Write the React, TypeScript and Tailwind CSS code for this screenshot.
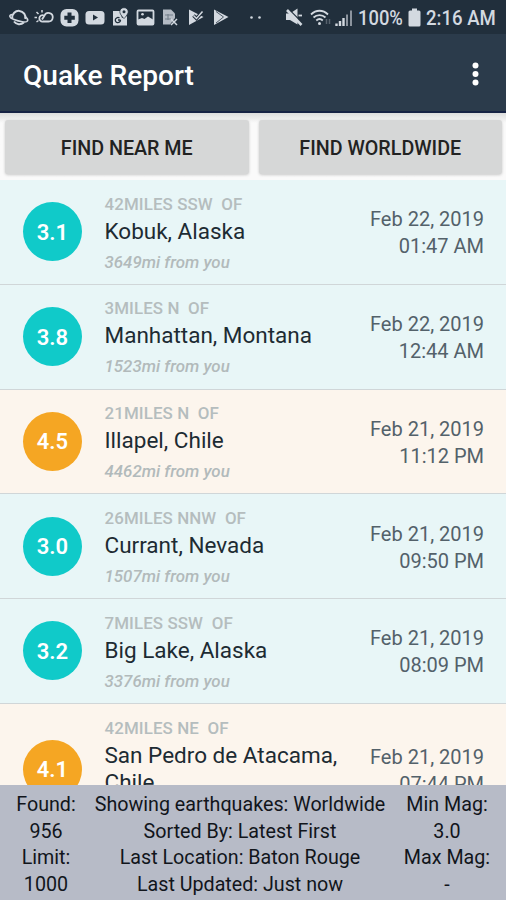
type Quake = {
    mag: string;
    offset: string;
    place: string;
    distance: string;
    date: string;
    time: string;
};

const quakes: Quake[] = [
    { mag: "3.1", offset: "42MILES SSW  OF", place: "Kobuk, Alaska", distance: "3649mi from you", date: "Feb 22, 2019", time: "01:47 AM" },
    { mag: "3.8", offset: "3MILES N  OF", place: "Manhattan, Montana", distance: "1523mi from you", date: "Feb 22, 2019", time: "12:44 AM" },
    { mag: "4.5", offset: "21MILES N  OF", place: "Illapel, Chile", distance: "4462mi from you", date: "Feb 21, 2019", time: "11:12 PM" },
    { mag: "3.0", offset: "26MILES NNW  OF", place: "Currant, Nevada", distance: "1507mi from you", date: "Feb 21, 2019", time: "09:50 PM" },
    { mag: "3.2", offset: "7MILES SSW  OF", place: "Big Lake, Alaska", distance: "3376mi from you", date: "Feb 21, 2019", time: "08:09 PM" },
    { mag: "4.1", offset: "42MILES NE  OF", place: "San Pedro de Atacama, Chile", distance: "", date: "Feb 21, 2019", time: "07:44 PM" },
];

function NotificationIcons() {
    return (
        <svg width="230" height="34" viewBox="0 0 230 34" fill="none" stroke="#d3d9e0" strokeWidth="1.8" className="shrink-0">
            {/* planet */}
            <path d="M12.300 18a6.600 6.600 0 1 1 13 1M14 21.500a6.600 6.600 0 0 0 9.800 1" strokeWidth="2" />
            <path d="M12.500 14.500c-4 .5-3.500 3 1.500 5s12.500 3.500 13.500 1.500-.5-3-2.500-4.500" strokeWidth="1.6" />
            {/* weather */}
            <path d="M43 21.500h5.500a4.300 4.300 0 1 0-4-6l-2.500 4M43 21.500a3.200 3.200 0 1 1 1-6" />
            <path d="M37 17.500h-2.500M38.500 14l-2-2M42 12.500V10M38.500 20.500l-2 1.500" strokeWidth="1.500" />
            {/* health */}
            <rect x="60.500" y="9" width="18" height="17.500" rx="6" fill="#d3d9e0" stroke="none" />
            <path d="M69.500 12.500v10.500M64.300 17.700h10.500" stroke="#212f3c" strokeWidth="4" />
            {/* video */}
            <rect x="85.500" y="11" width="19" height="13.500" rx="3.500" fill="#d3d9e0" stroke="none" />
            <path d="M93 14.500v6l5-3z" fill="#212f3c" stroke="none" />
            {/* maps */}
            <path d="M113 11h7l2 7 5-2v9.500h-14z" fill="#d3d9e0" stroke="none" />
            <path d="M120.500 20h-2.500m2.500 0a2.600 2.600 0 1 1-1-2" stroke="#212f3c" strokeWidth="1.300" />
            <path d="M124 7.700c-2.500 0-4.200 1.700-4.200 4.100 0 2.700 4.200 6.800 4.200 6.800s4.200-4.100 4.200-6.800c0-2.400-1.700-4.100-4.200-4.100z" fill="#d3d9e0" stroke="#212f3c" strokeWidth=".7" />
            <circle cx="124" cy="11.800" r="1.500" fill="#212f3c" stroke="none" />
            {/* picture */}
            <rect x="137.500" y="10.500" width="16" height="14" rx="1" />
            <path d="M139 20.500v-8h13v6l-2.500-3-3 2.500-2.500-1z" fill="#212f3c" stroke="none" />
            <path d="M138 19.500l4-1.500 2.500 1 3.500-2.500 5 3v5h-15z" fill="#d3d9e0" stroke="none" />
            <circle cx="142.500" cy="14.300" r="1.300" fill="#d3d9e0" stroke="none" />
            {/* card error */}
            <path d="M163 9.500h8l4 4V18l-5 6.500h-7z" fill="#b4bbc4" stroke="none" />
            <path d="M165 15h8M165 19h6M168 14v6" stroke="#75808b" strokeWidth="1.100" />
            <path d="M171 19l6 6M177 19l-6 6" stroke="#d3d9e0" strokeWidth="1.500" />
            {/* play check */}
            <path d="M189 9.500l14.500 7.500L189 25z" fill="#d3d9e0" stroke="none" />
            <path d="M193.500 15.500l3 3 7-8" stroke="#212f3c" strokeWidth="3.500" />
            <path d="M193.500 15.500l3 3 6-7" strokeWidth="1.500" />
            {/* play store */}
            <path d="M214 9.500l14.500 7.500L214 25z" fill="#d3d9e0" stroke="none" />
            <path d="M216 11.500l7.500 5.500-7.500 6" stroke="#4c5966" strokeWidth="1" />
        </svg>
    );
}

function SystemIcons() {
    return (
        <svg width="106" height="34" viewBox="0 0 106 34" fill="none" stroke="#d3d9e0" className="shrink-0">
            <circle cx="1.500" cy="17.500" r="1.300" fill="#d3d9e0" stroke="none" />
            <circle cx="9.500" cy="17.500" r="1.300" fill="#d3d9e0" stroke="none" />
            {/* muted speaker */}
            <path d="M36 13.500h4l7.500-5v16l-7.500-4.500h-4z" fill="#d3d9e0" stroke="none" />
            <path d="M39 9.500l13.500 13.500" stroke="#212f3c" strokeWidth="1.200" />
            <path d="M37 10l14.500 15" strokeWidth="2.600" />
            <path d="M48.500 15.500h3.500" strokeWidth="1.800" />
            {/* wifi */}
            <path d="M61 14.500c5-5 12-5 17 0" strokeWidth="1.800" />
            <path d="M63.500 17.500c3.500-3.300 8.500-3.300 12 0" strokeWidth="1.800" />
            <path d="M66.300 20.500c2-1.800 4.500-1.800 6.500 0" strokeWidth="1.800" />
            <circle cx="69.500" cy="23.500" r="1.500" fill="#d3d9e0" stroke="none" />
            <path d="M76.500 19v5M79.500 19v5" strokeWidth="1.500" opacity=".3" />
            {/* signal */}
            <path d="M86.500 23.500V26M90 21V26M93.500 18V26" strokeWidth="2.400" />
            <path d="M97 14.500V26M101 10.500V26" strokeWidth="2" opacity=".6" />
        </svg>
    );
}

function StatusBar() {
    return (
        <div className="flex h-[34px] shrink-0 items-center bg-[#212f3c] text-[20px] text-[#d3d9e0]">
            <NotificationIcons />
            <div className="ml-[20px]"><SystemIcons /></div>
            <span className="ml-[2px] w-[50px] origin-left scale-x-[0.92] whitespace-nowrap pt-0.5 font-medium">100%</span>
            <svg width="14" height="20" viewBox="0 0 14 20" fill="#d3d9e0" className="mt-0.5 shrink-0">
                <path d="M4 0.500h5v2h2a1.500 1.500 0 0 1 1.500 1.500v13a1.500 1.500 0 0 1-1.500 1.500H2a1.500 1.500 0 0 1-1.500-1.500v-13A1.500 1.500 0 0 1 2 2.500h2z" />
            </svg>
            <span className="ml-[4px] origin-left scale-x-[0.93] whitespace-nowrap pt-0.5 font-medium">2:16 AM</span>
        </div>
    );
}

function QuakeRow({ quake }: { quake: Quake }) {
    const strong = quake.mag.startsWith("4");
    const tall = quake.place.length > 20;

    return (
        <li className={`flex shrink-0 items-center border-b border-[#d0d6d8] pl-[23px] pr-[22px] ${tall ? "h-[132px]" : "h-[104.75px]"} ${strong ? "bg-[#fcf5ed]" : "bg-[#e8f6f7]"}`}>
            <div className={`flex size-[59px] shrink-0 items-center justify-center rounded-full pt-px text-[22px] font-semibold text-white ${strong ? "bg-[#f5a623]" : "bg-[#10cac9]"}`}>
                {quake.mag}
            </div>
            <div className="ml-[22.5px] flex-1 pt-[1.5px]">
                <p className="whitespace-pre text-[16.9px] font-medium leading-[20px] tracking-[0.1px] text-[#b5bdbe]">{quake.offset}</p>
                <p className="mt-[4px] text-[22.5px] leading-[27px] text-[#1d2b33]">{quake.place}</p>
                <p className="mt-[7px] h-[20px] text-[16.9px] font-medium italic leading-[20px] text-[#b2babb]">{quake.distance}</p>
            </div>
            <div className="shrink-0 pt-[3px] text-right text-[20px] leading-[27px] text-[#53616a]">
                <p>{quake.date}</p>
                <p>{quake.time}</p>
            </div>
        </li>
    );
}

function Footer() {
    return (
        <div className="flex h-[115px] shrink-0 bg-[#b7bbc7] pt-[7px] text-center text-[19.7px] leading-[26.7px] text-[#11151b]">
            <div className="w-[92px]">
                <p>Found:</p>
                <p>956</p>
                <p>Limit:</p>
                <p>1000</p>
            </div>
            <div className="w-[296px]">
                <p>Showing earthquakes: Worldwide</p>
                <p>Sorted By: Latest First</p>
                <p>Last Location: Baton Rouge</p>
                <p>Last Updated: Just now</p>
            </div>
            <div className="w-[118px]">
                <p>Min Mag:</p>
                <p>3.0</p>
                <p>Max Mag:</p>
                <p>-</p>
            </div>
        </div>
    );
}

function App() {
    return (
        <div className="flex h-[900px] w-[506px] flex-col overflow-hidden bg-[#fafafa] font-['Roboto',sans-serif]">
            <StatusBar />
            <header className="flex h-[79px] shrink-0 items-center justify-between border-b-2 border-[#162344] bg-[#2b3b4b] pl-[23px] pr-[27px] text-white">
                <h1 className="pt-2 text-[28.1px] font-medium">Quake Report</h1>
                <svg width="7" height="24" viewBox="0 0 7 24" fill="currentColor" className="mt-0.5">
                    <circle cx="3.5" cy="3.500" r="3" />
                    <circle cx="3.5" cy="12" r="3" />
                    <circle cx="3.5" cy="20.500" r="3" />
                </svg>
            </header>
            <div className="flex h-[67px] shrink-0 gap-[10px] bg-linear-to-b from-[#dcdddd] to-[#fafafa] to-[10px] pl-[5px] pr-[4px] pt-[7px]">
                <button className="h-[54px] flex-1 rounded-[3px] bg-[#d6d7d7] pt-[3px] text-[19.7px] font-medium text-[#222222] shadow-[0_1px_3px_rgba(0,0,0,0.2)]">FIND NEAR ME</button>
                <button className="h-[54px] flex-1 rounded-[3px] bg-[#d6d7d7] pt-[3px] text-[19.7px] font-medium text-[#222222] shadow-[0_1px_3px_rgba(0,0,0,0.2)]">FIND WORLDWIDE</button>
            </div>
            <ul className="flex min-h-0 flex-1 flex-col overflow-hidden">
                {quakes.map((quake) => (
                    <QuakeRow key={quake.place} quake={quake} />
                ))}
            </ul>
            <Footer />
        </div>
    );
}

export default App;
